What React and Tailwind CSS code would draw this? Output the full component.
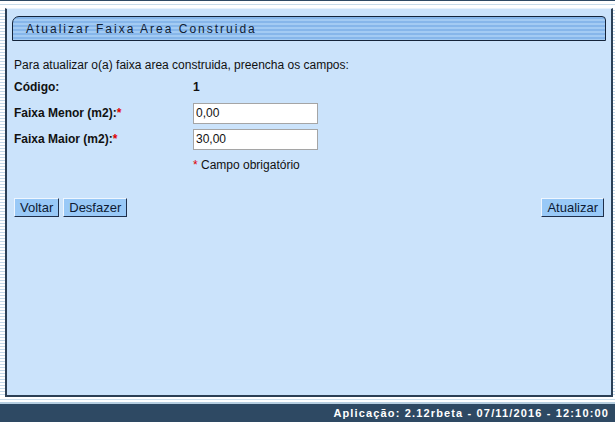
import React from "react";

const stripes =
  "bg-[repeating-linear-gradient(180deg,#ffffff_0px,#ffffff_2px,#c4d9ea_2px,#c4d9ea_3px)]";

const Btn = ({ children }) => (
  <button className="h-[19px] px-[5px] bg-[#99c9f7] text-[13px] leading-none text-[#0d1a33] border border-t-[#eef6ff] border-l-[#eef6ff] border-b-[#1f2f4a] border-r-[#1f2f4a]">
    {children}
  </button>
);

const Row = ({ label, required, children, h = "h-[26px]" }) => (
  <div className={`flex items-center ${h}`}>
    <div className="w-[179px] font-bold">
      {label}
      {required && <span className="text-[#e00000]">*</span>}
    </div>
    <div>{children}</div>
  </div>
);

export default function App() {
  return (
    <div className="w-[615px] h-[422px] flex flex-col bg-white font-['Liberation_Sans',Arial,sans-serif] text-[12px] text-[#111]">
      <div className="h-[8px] border-t border-[#2d4963] bg-[linear-gradient(180deg,#ffffff_0px,#ffffff_3px,#c9dcea_3px,#c9dcea_4px,#ffffff_4px)]" />
      <div className="flex flex-1 min-h-0">
        <div className={`w-[5px] ${stripes}`} />
        <div className="flex-1 flex flex-col bg-[#cbe3fb] border-l-2 border-r-2 border-b-2 border-[#2b3f55] border-t border-t-[#e8f2fc]">
          <div className="mx-[5px] mt-[7px] h-[25px] flex items-center pl-[13px] border border-[#14243a] rounded-tl-[7px] rounded-tr-[4px] bg-[repeating-linear-gradient(180deg,#86b6ea_0px,#86b6ea_2px,#a3cbf3_2px,#a3cbf3_4px)]">
            <span className="text-[12px] tracking-[2px] text-[#102033]">Atualizar Faixa Area Construida</span>
          </div>
          <div className="px-[7px] pt-[15px]">
            <div className="h-[17px] flex items-center">
              Para atualizar o(a) faixa area construida, preencha os campos:
            </div>
            <Row label="Código:" h="h-[27px]">
              <span className="font-bold">1</span>
            </Row>
            <Row label="Faixa Menor (m2):" required>
              <input
                defaultValue="0,00"
                className="w-[125px] h-[21px] bg-white border border-[#a5a5a5] px-[2px] text-[12px] outline-none"
              />
            </Row>
            <Row label="Faixa Maior (m2):" required>
              <input
                defaultValue="30,00"
                className="w-[125px] h-[21px] bg-white border border-[#a5a5a5] px-[2px] text-[12px] outline-none"
              />
            </Row>
            <Row label="">
              <span>
                <span className="text-[#e00000]">*</span> Campo obrigatório
              </span>
            </Row>
            <div className="flex justify-between items-center mt-[20px]">
              <div className="flex gap-[4px]">
                <Btn>Voltar</Btn>
                <Btn>Desfazer</Btn>
              </div>
              <Btn>Atualizar</Btn>
            </div>
          </div>
        </div>
        <div className={`w-[2px] ${stripes}`} />
      </div>
      <div className="h-[7px] bg-[linear-gradient(180deg,#ffffff_0px,#ffffff_2px,#c9dcea_2px,#c9dcea_3px,#ffffff_3px,#ffffff_5px,#b7cfe1_5px)]" />
      <div className="h-[18px] bg-[#2e4963] flex items-center justify-end pr-[6px]">
        <span className="text-white font-bold text-[11px] tracking-[1.15px]">
          Aplicação: 2.12rbeta - 07/11/2016 - 12:10:00
        </span>
      </div>
    </div>
  );
}
